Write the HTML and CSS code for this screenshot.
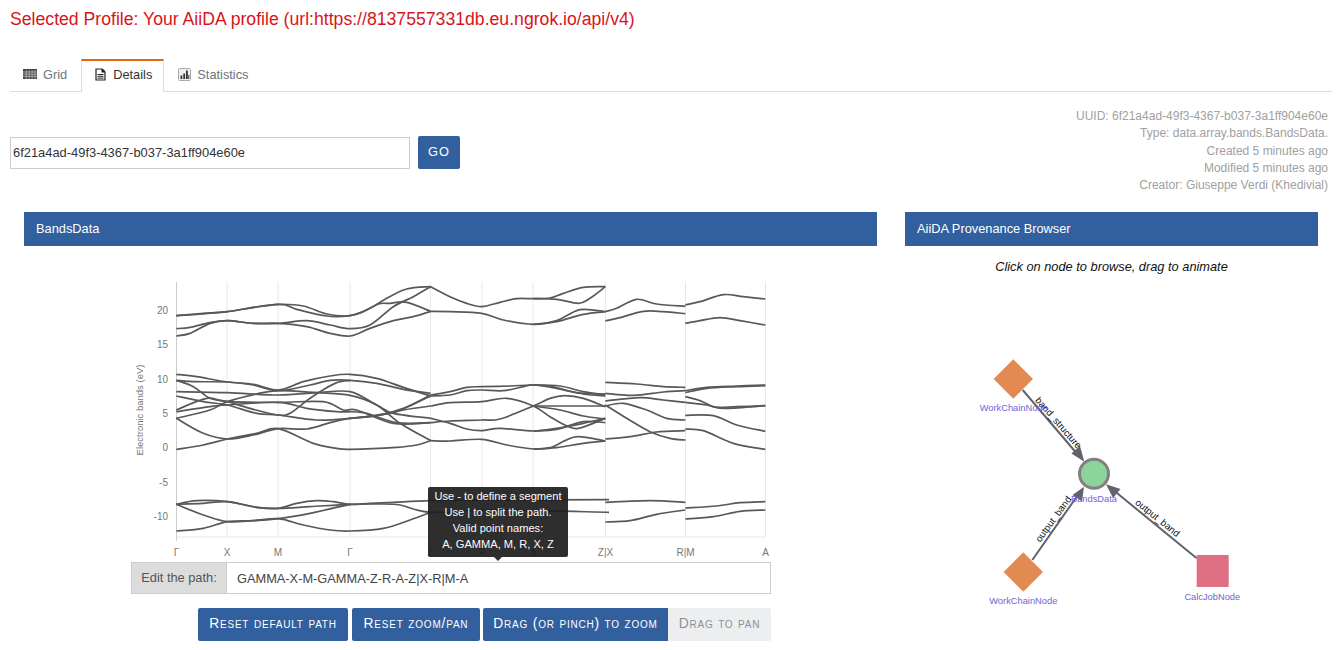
FILE: index.html
```html
<!DOCTYPE html>
<html lang="en">
<head>
    <meta charset="UTF-8">
    <meta name="viewport" content="width=device-width, initial-scale=1.0">
    <title>AiiDA Explorer</title>
    <link rel="stylesheet" href="styles.css">
</head>
<body>
    <div class="page">
        <!-- Profile -->
        <h1 class="profile">Selected Profile: Your AiiDA profile (url:https://8137557331db.eu.ngrok.io/api/v4)</h1>

        <!-- Tabs -->
        <ul class="tabs">
            <li class="tab">
                <svg class="tab-icon" width="14" height="10" viewBox="0 0 14 10">
                    <path fill="#444" d="M0 0h14v10H0z"/>
                    <path stroke="#ddd" stroke-width=".6" d="M0 3h14M0 5.2h14M0 7.4h14M3.3 1v9M6.2 1v9M9.1 1v9M12 1v9"/>
                </svg>
                Grid
            </li>
            <li class="tab active">
                <svg class="tab-icon" width="11" height="13" viewBox="0 0 11 13">
                    <path fill="none" stroke="#222" stroke-width="1.2" d="M1 1h6l3 3v8H1z"/>
                    <path fill="#222" d="M6.5 1H8l2 2.2v1.3H6.500z"/>
                    <path stroke="#222" d="M2.500 6.500h6M2.500 8.300h6M2.500 10.100h6"/>
                </svg>
                Details
            </li>
            <li class="tab">
                <svg class="tab-icon" width="13" height="13" viewBox="0 0 13 13">
                    <rect x=".5" y=".5" width="12" height="12" rx="1" fill="#eee" stroke="#aaa"/>
                    <path fill="#333" d="M2.500 7.500h1.800V11H2.500zM5.300 5.500h1.800V11H5.300zM8 2.500h1.800V11H8zM10.300 7h1V11h-1z"/>
                </svg>
                Statistics
            </li>
        </ul>

        <!-- Search + node info -->
        <div class="search-row">
            <div class="search">
                <input class="search-input" type="text" value="6f21a4ad-49f3-4367-b037-3a1ff904e60e">
                <button class="go-btn">GO</button>
            </div>
            <div class="meta">
                <div>UUID: 6f21a4ad-49f3-4367-b037-3a1ff904e60e</div>
                <div>Type: data.array.bands.BandsData.</div>
                <div>Created 5 minutes ago</div>
                <div>Modified 5 minutes ago</div>
                <div>Creator: Giuseppe Verdi (Khedivial)</div>
            </div>
        </div>

        <div class="columns">
            <!-- Band structure -->
            <section class="panel">
                <div class="panel-head">BandsData</div>
                <div class="plot-wrap">
                    <svg id="plot" class="plot" width="640" height="285" viewBox="130 275 640 285">
                        <g class="grid">
                            <path d="M227 282V537M278 282V537M350 282V537M430.500 282V537M482 282V537M533 282V537M605.500 282V537M685.500 282V537M765.500 282V537M176.500 537H766"/>
                        </g>
                        <path class="axis" d="M176.500 282V541"/>
                        <g class="y-labels">
                            <text x="168" y="313.500">20</text>
                            <text x="168" y="347.800">15</text>
                            <text x="168" y="382.500">10</text>
                            <text x="168" y="416.800">5</text>
                            <text x="168" y="451.300">0</text>
                            <text x="168" y="485.700">-5</text>
                            <text x="168" y="520">-10</text>
                        </g>
                        <text class="y-title" transform="translate(143 410) rotate(-90)">Electronic bands (eV)</text>
                        <g class="x-labels">
                            <text x="176.500" y="556">Γ</text>
                            <text x="227" y="556">X</text>
                            <text x="278" y="556">M</text>
                            <text x="350" y="556">Γ</text>
                            <text x="430.500" y="556">Z</text>
                            <text x="482" y="556">R</text>
                            <text x="533" y="556">A</text>
                            <text x="605.500" y="556">Z|X</text>
                            <text x="685.500" y="556">R|M</text>
                            <text x="765.500" y="556">A</text>
                        </g>
                    </svg>
                    <div class="tooltip">
                        Use - to define a segment<br>
                        Use | to split the path.<br>
                        Valid point names:<br>
                        A, GAMMA, M, R, X, Z
                    </div>
                </div>
                <div class="path-group">
                    <span class="path-label">Edit the path:</span>
                    <input class="path-input" type="text" value="GAMMA-X-M-GAMMA-Z-R-A-Z|X-R|M-A">
                </div>
                <div class="plot-btns">
                    <button class="btn btn-path">Reset default path</button>
                    <button class="btn btn-view">Reset zoom/pan</button>
                    <div class="btn-pair">
                        <button class="btn btn-zoom">Drag (or pinch) to zoom</button>
                        <button class="btn btn-pan off">Drag to pan</button>
                    </div>
                </div>
            </section>

            <!-- Provenance graph -->
            <section class="panel">
                <div class="panel-head">AiiDA Provenance Browser</div>
                <p class="hint">Click on node to browse, drag to animate</p>
                <svg class="graph" width="413" height="340" viewBox="905 280 413 340">
                    <g class="edges">
                        <path d="M1022.700 390L1079 456"/>
                        <path d="M1032.300 560L1080 492"/>
                        <path d="M1196.700 558.300L1112 489"/>
                    </g>
                    <g class="arrows">
                        <path d="M1084.300 461.700L1071.500 453.500L1080 446z"/>
                        <path d="M1084 486.700L1082 501.500L1072.500 495z"/>
                        <path d="M1106 484.300L1120.500 489L1113 498z"/>
                    </g>
                    <path class="wf" d="M1013.300 359.300L1033 379L1013.300 398.700L993.600 379z"/>
                    <path class="wf" d="M1023.300 552.300L1043 572L1023.300 591.700L1003.600 572z"/>
                    <rect class="calc" x="1196.700" y="555" width="32" height="32"/>
                    <circle class="data" cx="1094" cy="473.700" r="14.500"/>
                    <g class="edge-labels">
                        <text transform="translate(1056 425) rotate(49)">band_structure</text>
                        <text transform="translate(1056 521) rotate(-54)">output_band</text>
                        <text transform="translate(1155.500 520.500) rotate(38.700)">output_band</text>
                    </g>
                    <g class="node-labels">
                        <text x="1013.700" y="411">WorkChainNode</text>
                        <text x="1094" y="502">BandsData</text>
                        <text x="1023.300" y="604">WorkChainNode</text>
                        <text x="1212.300" y="600">CalcJobNode</text>
                    </g>
                </svg>
            </section>
        </div>
    </div>
    <script src="plot.js"></script>
</body>
</html>
```

FILE: styles.css
```css
body {
    margin: 0;
    height: 650px;
    overflow: hidden;
    font-family: "Liberation Sans", Arial, sans-serif;
    background: white;
    color: #333;
}

.page {
    margin-left: 4px; /* pale strip on the left */
    padding: 0 6px;
    height: 650px;
    box-sizing: border-box;
    background: white;
}

html {
    background: #f1f6fc;
}

/* Profile line */
.profile {
    margin: 0;
    padding-top: 9px;
    font-size: 17.650px;
    line-height: 20px;
    font-weight: normal;
    color: #d8141b;
}

/* Tabs */
.tabs {
    display: flex;
    list-style: none;
    margin: 30px 0 0 0;
    padding: 0;
    height: 32px;
    border-bottom: 1px solid #ddd;
}

.tab {
    display: flex;
    align-items: center;
    gap: 6px;
    padding: 0 13px 4px 13px;
    box-sizing: border-box;
    height: 32px;
    font-size: 12.800px;
    color: #6c757d;
    border-top: 2px solid transparent;
}

.tab.active {
    color: #333;
    background: white;
    height: 33px;
    gap: 7px;
    margin: 0 1px 0 1px;
    padding: 0 11px 5px 13px;
    border: 1px solid #ddd;
    border-top: 2px solid #e0660f;
    border-bottom: none;
}

.tab-icon {
    flex: none;
}

/* Search row */
.search-row {
    display: flex;
    justify-content: space-between;
    height: 120px;
}

.search {
    display: flex;
    gap: 8px;
    align-items: flex-start;
    padding-top: 44px;
}

.search-input {
    width: 400px;
    height: 32px;
    box-sizing: border-box;
    border: 1px solid #ccc;
    padding: 0 2px 2px 2px;
    font: 12.900px "Liberation Sans", Arial, sans-serif;
    color: #333;
    margin-top: 1px;
}

.go-btn {
    width: 42px;
    height: 33px;
    border: none;
    border-radius: 2px;
    padding: 0 0 2px 0;
    background: #325f9e;
    color: white;
    font: 12.800px "Liberation Sans", Arial, sans-serif;
    letter-spacing: 1px;
}

.meta {
    margin-top: 16px;
    text-align: right;
    font-size: 12px;
    line-height: 17.300px;
    color: #a0a0a0;
    padding-right: 4px;
}

/* Columns */
.columns {
    display: grid;
    grid-template-columns: 881px 441px;
}

.panel {
    padding: 0 14px;
    min-width: 0;
}

.panel-head {
    height: 34px;
    line-height: 34px;
    padding-left: 12px;
    background: #325f9e;
    color: white;
    font-size: 12.800px;
}

.plot-wrap {
    position: relative;
    height: 316px;
    padding: 29px 0 0 106px;
    box-sizing: border-box;
}

.plot {
    display: block;
}

.grid path {
    fill: none;
    stroke: #e8e8e8;
    stroke-width: 1;
}

.axis {
    fill: none;
    stroke: #ccc;
    stroke-width: 1;
}

.band {
    fill: none;
    stroke: #585858;
    stroke-width: 1.700;
}

.y-labels text {
    font-size: 10px;
    fill: #777;
    text-anchor: end;
}

.y-title {
    font-size: 9.500px;
    fill: #777;
    text-anchor: middle;
}

.x-labels text {
    font-size: 10px;
    fill: #777;
    text-anchor: middle;
}

/* Tooltip over the plot */
.tooltip {
    position: absolute;
    left: 404px;
    top: 241px;
    width: 140px;
    height: 70px;
    box-sizing: border-box;
    padding-top: 1px;
    border-radius: 2px;
    background: rgba(30, 30, 30, 0.93);
    color: white;
    font-size: 11.100px;
    line-height: 16px;
    text-align: center;
}

.tooltip::after {
    content: "";
    position: absolute;
    left: 66px;
    bottom: -4px;
    border-style: solid;
    border-width: 4px 4px 0 4px;
    border-color: rgba(30, 30, 30, 0.93) transparent transparent transparent;
}

/* Path input */
.path-group {
    display: flex;
    margin-left: 107px;
    width: 640px;
    height: 32px;
    box-sizing: border-box;
    border: 1px solid #ccc;
}

.path-label {
    width: 95px;
    flex: none;
    background: #dcdcdc;
    border-right: 1px solid #ccc;
    color: #555;
    font-size: 12.800px;
    line-height: 30px;
    text-align: center;
    box-sizing: border-box;
}

.path-input {
    flex: 1;
    min-width: 0;
    border: none;
    padding: 0 10px;
    font: 12.800px "Liberation Sans", Arial, sans-serif;
    color: #444;
}

.plot-btns {
    display: flex;
    gap: 4px;
    margin: 14px 0 0 174px;
    width: 573px;
}

.btn {
    height: 33px;
    padding: 0 0 2px 0;
    border: none;
    border-radius: 2px;
    background: #325f9e;
    color: white;
    font: small-caps 13.800px "Liberation Sans", Arial, sans-serif;
    letter-spacing: 0.800px;
    white-space: nowrap;
}

.btn-path {
    width: 150px;
}

.btn-view {
    width: 128px;
}

.btn-zoom {
    width: 185px;
}

.btn-pan {
    width: 103px;
}

.btn-pair {
    display: flex;
    margin-left: -1px;
}

.btn-pair .btn:first-child {
    border-radius: 2px 0 0 2px;
}

.btn.off {
    background: #eceeef;
    color: #8b9196;
    border-radius: 0 2px 2px 0;
}

/* Provenance graph */
.hint {
    margin: 14px 0 6px 0;
    font-size: 12.800px;
    line-height: 14px;
    font-style: italic;
    color: #111;
    text-align: center;
}

.graph {
    display: block;
}

.edges path {
    fill: none;
    stroke: #62626e;
    stroke-width: 2;
}

.arrows path {
    fill: #62626e;
}

.wf {
    fill: #e38a53;
}

.calc {
    fill: #df6f82;
}

.data {
    fill: #8dd39c;
    stroke: #808080;
    stroke-width: 3;
}

.edge-labels text {
    font-size: 9.700px;
    fill: #111;
    text-anchor: middle;
}

.node-labels text {
    font-size: 9.300px;
    fill: #7262d6;
    text-anchor: middle;
}
```

FILE: plot.js
```js
// Bands traced from the picture at 3x: [x, y, x, y, ...]
// Each origin turns the traced numbers back into plot coordinates
const upperLeft = [130, 270];
const upperRight = [450, 270];
const lowerLeft = [130, 470];
const lowerRight = [450, 470];

const bands = [
    // high bands, gamma to Z
    [upperLeft, [139,137, 200,133, 292,125, 370,112, 445,103, 520,108, 590,132, 660,137, 720,115, 770,85, 830,57, 902,50]],
    [upperLeft, [139,137, 220,130, 292,125, 445,103, 500,118, 590,138, 660,137, 700,125, 745,102, 780,100, 830,97, 902,124]],
    [upperLeft, [139,176, 180,172, 240,158, 292,152, 370,160, 445,160, 530,152, 600,165, 660,176, 720,165, 790,110, 850,80, 902,50]],
    [upperLeft, [139,198, 180,190, 240,160, 292,152, 370,160, 445,160, 530,170, 600,190, 660,198, 720,175, 790,152, 850,140, 902,124]],

    // high bands, Z to A
    [upperRight, [-58,50, 0,80, 50,100, 95,110, 150,97, 200,86, 250,86, 300,84, 340,70, 400,52, 466,50]],
    [upperRight, [250,86, 320,88, 385,100, 420,85, 466,50]],
    [upperRight, [-58,124, 0,125, 95,130, 160,150, 250,163, 320,152, 390,119, 466,125]],
    [upperRight, [250,163, 320,155, 400,133, 466,125]],
    [upperRight, [466,125, 500,115, 560,88, 620,102, 706,109]],
    [upperRight, [466,153, 510,143, 580,124, 640,125, 706,131]],
    [upperRight, [706,105, 750,95, 820,74, 880,80, 946,87]],
    [upperRight, [706,160, 750,152, 810,143, 870,152, 946,165]],

    // middle bands, gamma to Z
    [upperLeft, [139,313, 200,320, 292,336, 370,343, 445,360, 520,335, 600,318, 660,313, 740,325, 820,352, 902,378]],
    [upperLeft, [139,331, 200,335, 292,336, 370,345, 445,362, 540,345, 600,331, 660,331, 740,340, 820,358, 902,370]],
    [upperLeft, [139,331, 190,350, 240,385, 292,395, 370,418, 445,435, 480,430, 530,392, 570,365, 620,338, 660,331]],
    [upperLeft, [139,365, 292,368, 445,375, 560,368, 660,365, 740,405, 790,430, 902,445]],
    [upperLeft, [139,378, 220,395, 292,405, 380,430, 445,435, 560,450, 660,445, 740,435, 800,425, 902,378]],
    [upperLeft, [139,420, 230,385, 292,395, 445,397, 580,395, 640,420, 680,420, 790,460, 902,458]],
    [upperLeft, [139,425, 240,410, 292,405, 445,397, 530,415, 620,425, 700,428, 800,458, 902,458]],
    [upperLeft, [139,445, 240,420, 292,395, 380,372, 445,362, 560,368, 660,376, 740,405, 810,460, 902,512]],
    [upperLeft, [139,445, 220,490, 292,507, 370,495, 445,476, 530,477, 600,458, 660,445, 740,437, 820,415, 902,375]],
    [upperLeft, [139,538, 220,525, 292,507, 380,490, 445,476, 550,520, 620,535, 660,538, 800,532, 860,525, 902,512]],
    [upperLeft, [660,445, 740,437, 820,420, 902,408]],

    // middle bands, Z to A
    [upperRight, [-58,375, 0,365, 50,352, 95,350, 180,348, 250,345, 330,348, 400,365, 466,375]],
    [upperRight, [-58,378, 0,375, 50,362, 95,360, 160,362, 220,350, 250,345, 320,355, 400,372, 466,378]],
    [upperRight, [250,345, 300,348, 380,368, 466,372]],
    [upperRight, [-58,408, 0,398, 95,395, 170,385, 250,408, 300,440, 345,465, 385,475, 466,445]],
    [upperRight, [-58,458, 0,453, 95,450, 150,447, 250,408, 300,385, 345,377, 400,385, 466,410]],
    [upperRight, [250,408, 466,408]],
    [upperRight, [250,408, 330,420, 400,438, 466,447]],
    [upperRight, [-58,445, 0,460, 50,477, 95,482, 150,475, 250,483, 320,475, 400,460, 466,445]],
    [upperRight, [250,483, 320,478, 400,455, 466,458]],
    [upperRight, [-58,512, 0,513, 95,508, 170,525, 250,537, 300,533, 345,512, 385,500, 466,513]],
    [upperRight, [250,537, 320,533, 400,520, 466,513]],
    [upperRight, [466,337, 560,342, 640,350, 706,352]],
    [upperRight, [466,370, 550,376, 640,366, 706,362]],
    [upperRight, [466,393, 570,383, 640,390, 706,397]],
    [upperRight, [466,408, 520,400, 590,420, 650,445, 706,450]],
    [upperRight, [466,405, 530,445, 600,485, 660,505, 706,510]],
    [upperRight, [466,507, 540,500, 620,486, 706,482]],
    [upperRight, [706,368, 770,355, 860,350, 946,347]],
    [upperRight, [706,362, 770,352, 860,348, 946,345]],
    [upperRight, [706,380, 750,392, 790,410, 830,415, 946,407]],
    [upperRight, [706,397, 770,405, 800,412, 860,410, 946,407]],
    [upperRight, [706,436, 790,437, 860,465, 946,484]],
    [upperRight, [706,477, 760,482, 850,520, 946,538]],

    // low bands
    [lowerLeft, [139,103, 200,92, 292,95, 380,112, 445,115, 500,100, 560,92, 610,95, 660,103, 720,100, 790,97, 902,92, 1100,90, 1437,89]],
    [lowerLeft, [139,103, 220,100, 292,95, 380,112, 445,115, 540,110, 660,103, 740,102, 810,105, 902,127, 1100,120, 1437,127]],
    [lowerLeft, [139,103, 220,135, 292,155, 370,152, 445,146, 540,130, 660,103]],
    [lowerLeft, [139,183, 220,175, 292,155, 370,152, 445,146, 520,165, 600,180, 660,183, 760,175, 840,150, 902,127]],
    [lowerRight, [466,97, 600,92, 706,97]],
    [lowerRight, [466,156, 540,152, 620,133, 706,120]],
    [lowerRight, [706,114, 800,108, 870,98, 946,95]],
    [lowerRight, [706,147, 790,140, 870,124, 946,120]]
];

// Smooth line through the points (Catmull-Rom turned into beziers)
function smoothPath(origin, nums) {
    const pts = [];
    for (let i = 0; i < nums.length; i += 2) {
        pts.push([origin[0] + nums[i] / 3, origin[1] + nums[i + 1] / 3]);
    }
    let d = `M${pts[0][0]} ${pts[0][1]}`;
    for (let i = 0; i < pts.length - 1; i++) {
        const p0 = pts[Math.max(i - 1, 0)];
        const p1 = pts[i];
        const p2 = pts[i + 1];
        const p3 = pts[Math.min(i + 2, pts.length - 1)];
        const c1x = p1[0] + (p2[0] - p0[0]) / 6;
        const c1y = p1[1] + (p2[1] - p0[1]) / 6;
        const c2x = p2[0] - (p3[0] - p1[0]) / 6;
        const c2y = p2[1] - (p3[1] - p1[1]) / 6;
        d += `C${c1x} ${c1y} ${c2x} ${c2y} ${p2[0]} ${p2[1]}`;
    }
    return d;
}

const plot = document.getElementById('plot');
for (const [origin, nums] of bands) {
    const line = document.createElementNS('http://www.w3.org/2000/svg', 'path');
    line.setAttribute('class', 'band');
    line.setAttribute('d', smoothPath(origin, nums));
    plot.appendChild(line);
}
```
